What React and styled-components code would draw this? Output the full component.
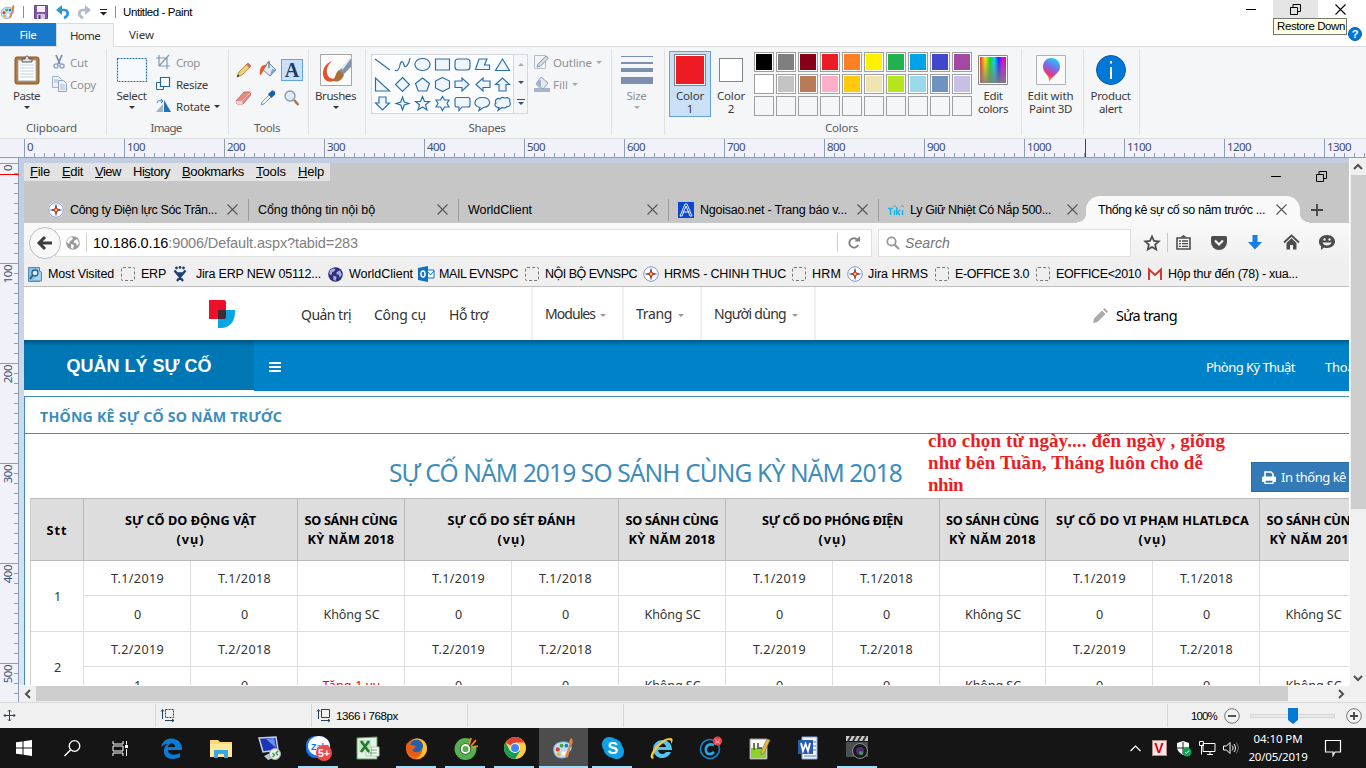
import React, { useLayoutEffect, useRef, useState } from "react";
import styled, { createGlobalStyle, css } from "styled-components";

const Global = createGlobalStyle`
  * { box-sizing: border-box; }
  body { margin: 0; overflow: hidden; background: #fff; }
  svg { display: block; flex: none; overflow: visible; }
`;

const ui = `"Noto Sans", "Open Sans", sans-serif`;
const arial = `"Liberation Sans", Arial, sans-serif`;

/* Spreads a label over a given width by adjusting its tracking. */
const FitSpan = styled.span`
  display: inline-block;
  white-space: pre;
  flex: none;
`;
function Fit({ w, children }) {
  const ref = useRef(null);
  const [gap, setGap] = useState(0);
  useLayoutEffect(() => {
    const el = ref.current;
    el.style.letterSpacing = "0px";
    const natural = el.getBoundingClientRect().width;
    setGap((w - natural) / el.textContent.length);
  }, [w]);
  return <FitSpan ref={ref} style={{ letterSpacing: `${gap}px` }}>{children}</FitSpan>;
}

const Svg = ({ w = 16, h = w, box = `0 0 ${w} ${h}`, children, ...rest }) => (
  <svg width={w} height={h} viewBox={box} fill="none" {...rest}>{children}</svg>
);

/* ---------- window frame ---------- */
const Screen = styled.div`
  width: 1366px; height: 768px; overflow: hidden;
  display: flex; flex-direction: column; position: relative;
  font-family: ${ui}; font-size: 11.5px; color: #444;
`;
const TitleBar = styled.div`
  height: 23px; display: flex; align-items: center; justify-content: space-between; background: #fff; flex: none;
`;
const Quick = styled.div`display: flex; align-items: center; height: 23px;`;
const QuickSlot = styled.span`
  width: ${p => p.$w}px; display: flex; justify-content: center;
`;
const QuickSep = styled.i`width: 1px; height: 12px; background: #8d8d8d;`;
const WinTitle = styled.span`
  margin-left: 6px; font: 11.5px ${arial}; color: #000;
`;
const WinButtons = styled.div`display: flex; align-self: flex-start;`;
const WinButton = styled.div`
  width: 45px; height: 22px; display: flex; align-items: center; justify-content: center;
  padding-bottom: 3px;
  background: ${p => (p.$hot ? "#e5e5e5" : "none")};
`;
const Tooltip = styled.div`
  position: absolute; left: 1273px; top: 18px; width: 74px; height: 17px; padding-left: 3px;
  background: #ffffe1; border: 1px solid #767676; color: #000;
  font: 11.5px/15px ${arial};
`;
const HelpBadge = styled.div`
  position: absolute; left: 1348px; top: 27px; width: 14px; height: 14px; border-radius: 50%;
  background: #0078d7; border: 1px solid #0b5ea8; color: #fff; font: bold 11px/12px ${arial}; text-align: center;
`;
const TabStrip = styled.div`
  height: 24px; flex: none; display: flex; background: #fff; box-shadow: inset 0 -1px #dadbdc; 
`;
const RibbonTab = styled.div`
  width: ${p => p.$w}px; height: ${p => (p.$kind === "home" ? 24 : 23)}px;
  display: flex; justify-content: center; align-items: center;
  color: #333;
  ${p => p.$kind === "file" && css`background: #1979ca; color: #fff;`}
  ${p => p.$kind === "home" && css`background: #f5f6f7; border: 1px solid #dadbdc; border-bottom: 0;`}
`;

/* ---------- ribbon ---------- */
const Ribbon = styled.div`
  height: 92px; flex: none; background: #f5f6f7; border-bottom: 1px solid #dadbdc;
  display: flex; padding: 2px 0 3px;
`;
const Group = styled.div`
  width: ${p => p.$w}px; height: 86px; display: flex; flex-direction: column;
  border-right: 1px solid #e0e1e3; flex: none;
`;
const GroupBody = styled.div`height: 70px; flex: none; display: flex; padding-left: ${p => p.$pad || 0}px;`;
const GroupLabel = styled.div`
  height: 15px; flex: none; line-height: 15px; display: flex; justify-content: center; color: #5a5a5a; padding: 0 3px 0 0; margin-top: 1px;
`;
const Big = styled.div`
  width: ${p => p.$w}px; height: 66px; margin-top: 2px; margin-left: ${p => p.$ml || 0}px;
  display: flex; flex-direction: column; align-items: center; flex: none;
  color: ${p => (p.$dim ? "#8f9196" : "#3b3b3b")};
  ${p => p.$active && css`
    background: #c9e0f7; box-shadow: inset 0 0 0 1px #62a2e4;
  `}
`;
const BigArt = styled.div`height: 38px; display: flex; align-items: center; justify-content: center; flex: none;`;
const BigText = styled.div`height: 13px; line-height: 13px; flex: none;`;
const Caret = styled.i`
  border: ${p => p.$s || 3}px solid transparent; border-bottom: 0;
  border-top-color: ${p => p.$c || "#333"}; margin: ${p => p.$m || "4px 0 0"};
`;
const SmallCol = styled.div`display: flex; flex-direction: column; padding-top: 2px; width: ${p => p.$w}px; flex: none;`;
const Small = styled.div`
  height: 22px; display: flex; align-items: center; color: ${p => (p.$dim ? "#8f9196" : "#3b3b3b")};
`;
const SmallIcon = styled.span`width: ${p => p.$w || 19}px; display: flex;`;
const ToolGrid = styled.div`
  display: grid; grid-template-columns: repeat(3, 24px); grid-template-rows: 22px 22px; row-gap: 6px; padding-top: 10px;
`;
const ToolCell = styled.div`
  display: flex; align-items: center; justify-content: center; width: 22px;
  ${p => p.$active && css`background: #c9e0f7; border: 1px solid #62a2e4;`}
`;
const ToolLetter = styled.span`font: bold 20px/20px "Liberation Serif", serif; color: #1e3e66;`;
const ShapeBox = styled.div`
  width: 157px; height: 60px; margin-top: 5px; display: flex; border: 1px solid #d3d7de; background: #fbfcfd; flex: none;
`;
const ShapeGrid = styled.div`
  width: 141px; display: grid; grid-template-columns: repeat(7, 20px); grid-auto-rows: 19.6px; justify-items: center; align-items: center;
`;
const ShapeScroll = styled.div`
  flex: 1; border-left: 1px solid #d3d7de; display: flex; flex-direction: column; align-items: center; justify-content: space-around; background: #f5f6f7;
`;
const Swatch = styled.div`
  width: ${p => p.$s}px; height: ${p => p.$s}px; border: 1px solid #848484; background: ${p => p.$c};
  box-shadow: inset 0 0 0 1px #fff;
`;
const Palette = styled.div`
  display: grid; grid-template-columns: repeat(10, 20px); grid-auto-rows: 20px; gap: 2px; padding-top: 3px; margin: 0 4px 0 3px;
`;
const PaletteCell = styled.i`
  border: 1px solid #a0a0a0; background: ${p => p.$c || "#f5f6f7"};
  box-shadow: inset 0 0 0 1px ${p => (p.$c ? "#fff" : "#f5f6f7")};
`;
const SizeBars = styled.div`
  display: flex; flex-direction: column; width: 32px; height: 28px; justify-content: space-between;
`;
const SizeBar = styled.i`height: ${p => p.$h}px; background: #7d8fb0;`;

/* ---------- rulers ---------- */
const HRuler = styled.div`
  height: 19px; flex: none; padding-left: 24px; display: flex; overflow: hidden; position: relative;
  background: linear-gradient(#8c9db9, #8c9db9) 0 18px / 100% 1px no-repeat,
    repeating-linear-gradient(90deg, #8c9db9 0 1px, transparent 1px 10px) 24px 14px / 100% 5px no-repeat, #f0f1f9;
`;
const HMark = styled.span`
  width: 100px; height: 19px; flex: none; border-left: 1px solid #8c9db9; padding-left: 2px;
  line-height: 16px; color: #3d4f75;
`;
const HCursor = styled.i`position: absolute; left: 1085px; top: 0; width: 1px; height: 18px; background: #e80000;`;
const Work = styled.div`height: 544px; flex: none; display: flex;`;
const VRuler = styled.div`
  width: 19px; height: 544px; flex: none; padding-top: 5px; overflow: hidden; position: relative;
  background: linear-gradient(#8c9db9, #8c9db9) 18px 0 / 1px 100% no-repeat,
    repeating-linear-gradient(180deg, #8c9db9 0 1px, transparent 1px 10px) 14px 5px / 5px 100% no-repeat, #f0f1f9;
`;
const VMark = styled.div`
  height: 100px; border-top: 1px solid #8c9db9; display: flex; padding-top: 1px;
`;
const VText = styled.span`
  writing-mode: vertical-rl; transform: rotate(180deg); line-height: 16px; width: 16px; color: #3d4f75;
  height: max-content; letter-spacing: -.5px;
`;
const VCursor = styled.i`position: absolute; left: 0; top: 16px; width: 19px; height: 1px; background: #ff0000;`;
const Stage = styled.div`width: 1347px; display: flex; flex-direction: column;`;
const StageTop = styled.div`height: 528px; display: flex;`;
const Backdrop = styled.div`
  width: 1330px; height: 527px; padding: 5px 0 0 5px; background: linear-gradient(#c3cde1, #dce5f2);
  margin-right: 1px;
`;
const VScroll = styled.div`
  width: 16px; height: 528px; background: #f0f0f0; display: flex; flex-direction: column; align-items: center;
`;
const VThumb = styled.i`width: 15px; height: 334px; background: #cdcdcd;`;
const HScroll = styled.div`height: 16px; background: #f0f0f0; display: flex;`;
const HThumb = styled.i`width: 1252px; height: 15px; background: #cdcdcd;`;
const ArrowSlot = styled.span`
  width: ${p => p.$w}px; height: ${p => p.$h}px; display: flex; align-items: center; justify-content: center;
`;

/* ---------- browser in the canvas ---------- */
const Browser = styled.div`
  width: 1325px; height: 522px; overflow: hidden; position: relative; background: #fff; color: #000;
  display: flex; flex-direction: column;
`;
const Chrome = styled.div`height: 60px; flex: none; background: #c6c6c6;`;
const ChromeTop = styled.div`display: flex; justify-content: space-between; height: 33px;`;
const MenuBar = styled.div`
  width: 306px; height: 18px; background: #e3e3e3; display: flex; font: 13px/18px ${arial}; padding-left: 6px;
`;
const MenuItem = styled.span`width: ${p => p.$w}px; flex: none; u { text-underline-offset: 1px; }`;
const InnerButtons = styled.div`display: flex; gap: 35px; padding: 8px 22px 0 0;`;
const Tabs = styled.div`height: 27px; display: flex; padding-left: 15px; font: 12.5px ${arial};`;
const Tab = styled.div`
  width: 210px; height: 27px; display: flex; align-items: center; padding: 0 11px 0 9px; justify-content: space-between; position: relative;
  &::after { content: ""; position: absolute; right: 0; top: 3px; width: 1px; height: 22px; background: ${p => (p.$last ? "none" : "#9c9c9c")}; }
`;
const TabName = styled.span`display: flex; align-items: center; gap: 6px;`;
const ActiveTab = styled.div`
  width: 214px; height: 27px; display: flex; align-items: center; justify-content: space-between;
  padding: 0 13px 0 12px; background: #f9f9f9; border-radius: 14px 14px 0 0; position: relative; margin-left: -3px;
  &::before, &::after { content: ""; position: absolute; bottom: 0; width: 9px; height: 10px; }
  &::before { left: -9px; background: radial-gradient(circle at 0 0, transparent 9px, #f9f9f9 9.5px); }
  &::after { right: -9px; background: radial-gradient(circle at 100% 0, transparent 9px, #f9f9f9 9.5px); }
`;
const NewTab = styled.span`padding: 8px 0 0 11px;`;
const NavBar = styled.div`
  height: 39px; flex: none; background: linear-gradient(#f9f9f9, #efefef); display: flex; align-items: center; padding-left: 5px;
`;
const BackButton = styled.div`
  width: 32px; height: 32px; border-radius: 50%; border: 1px solid #bdbdbd; background: #f8f8f8; flex: none; z-index: 1;
  display: flex; align-items: center; justify-content: center; 
`;
const Url = styled.div`
  width: 817px; height: 28px; margin-left: -6px; border: 1px solid #dfdfdf; background: #fff;
  display: flex; align-items: center; font: 14.5px ${arial}; color: #808080; padding: 0 10px 0 10px;
  b { font-weight: 400; color: #000; }
`;
const UrlSep = styled.i`width: 1px; height: 19px; background: #cfcfcf; margin: ${p => p.$m}; flex: none;`;
const Grow = styled.span`flex: 1;`;
const SearchBox = styled.div`
  width: 253px; height: 28px; margin-left: 6px; border: 1px solid #dfdfdf; background: #fff; display: flex; align-items: center;
  padding-left: 7px; gap: 5px; font: italic 14px ${arial}; color: #757575;
`;
const NavIcons = styled.div`
  display: grid; grid-template-columns: 31px 30px 42px 30px 42px 30px; justify-items: center; align-items: center; margin-left: 6px;
`;
const StarSlot = styled.span`
  width: 31px; height: 19px; border-right: 1px solid #c8c8c8; display: flex; align-items: center; justify-content: center;
`;
const Bookmarks = styled.div`
  height: 25px; flex: none; background: #efefef; border-bottom: 1px solid #bdbdbd; padding-left: 4px; display: flex; align-items: center;
  font: 12.5px ${arial};
`;
const Bookmark = styled.div`width: ${p => p.$w}px; display: flex; align-items: center; flex: none;`;
const MarkIcon = styled.span`width: ${p => p.$w || 20}px; display: flex; flex: none;`;
const DashBox = styled.i`width: 14px; height: 14px; border: 1px dashed #777; border-radius: 2px;`;

/* ---------- web page ---------- */
const AdminBar = styled.div`
  height: 53px; flex: none; display: flex; font-size: 14px; color: #333; padding-left: 185px; align-items: center;
`;
const AdminLinks = styled.div`display: flex; padding: 1px 0 0 66px; width: 296px; gap: 23px;`;
const Dropdown = styled.div`
  width: ${p => p.$w}px; height: 53px; border-left: 2px solid #f0f0f0; padding: 0 0 0 12px; display: flex; align-items: center;
  ${p => p.$end && css`border-right: 2px solid #f0f0f0;`}
`;
const EditPage = styled.div`display: flex; align-items: center; gap: 8px; margin-left: 277px; color: #000; font-size: 14.5px; padding-top: 3px;`;
const Banner = styled.div`
  height: 51px; flex: none; background: linear-gradient(rgba(0,40,70,.45), transparent 6px), #0082c8; display: flex; color: #fff; font-size: 13px;
`;
const Brand = styled.div`
  width: 230px; height: 51px; flex: none; background: linear-gradient(rgba(0,40,70,.45), transparent 6px), #0077b5; border-bottom: 1px solid #fff;
  display: flex; align-items: center; justify-content: center; font: bold 18px ${arial}; padding-top: 2px;
`;
const BannerBar = styled.div`width: 1095px; display: flex; align-items: center; padding: 2px 0 0 15px; white-space: nowrap;`;
const BannerLinks = styled.div`display: flex; gap: 30px; margin-left: 925px;`;
const Panel = styled.div`
  margin-top: 5px; border-top: 1px solid #3c8dbc; border-left: 1px solid #3c8dbc; flex: 1; min-height: 0; overflow: hidden;
`;
const PanelHead = styled.div`
  height: 37px; border-bottom: 1px solid #3c8dbc; display: flex; align-items: center; padding: 2px 0 0 15px; color: #3c8dbc;
  font-weight: 700; font-size: 14.2px; 
`;
const ReportRow = styled.div`height: 64px; display: flex; color: #3c8dbc; font-size: 24.5px; line-height: 34px; padding: 22px 0 0 364px;`;
const PrintButton = styled.div`
  width: 120px; height: 30px; background: #337ab7; border: 1px solid #2e6da4; color: #fff; font-size: 13px; flex: none;
  display: flex; align-items: center; gap: 5px; padding-left: 10px; margin: 6px 0 0 349px;
`;
const Grid = styled.div`
  width: 1338px; margin-left: 5px; border-top: 1px solid #b9b9b9; border-left: 1px solid #ccc; display: grid;
  grid-template-columns: 53px repeat(8, 107px) 106px repeat(3, 107px);
  grid-template-rows: 62px 35px 36px 35px 36px; color: #333; font-size: 12.6px;
`;
const Head = styled.div`
  grid-column: span ${p => p.$span || 1}; background: #ddd; border-right: 1px solid #b9b9b9; border-bottom: 1px solid #b9b9b9;
  display: flex; flex-direction: column; align-items: center; justify-content: center; line-height: 19px; padding-top: 1px;
  font-weight: 700; font-size: 12.7px; color: #000;
`;
const Cell = styled.div`
  grid-row: span ${p => p.$rows || 1}; border-right: 1px solid #ddd; border-bottom: 1px solid #ddd; padding: 1px 0 0 1px;
  display: flex; align-items: center; justify-content: center; color: ${p => (p.$red ? "#f00" : "#333")};
`;
const Note = styled.div`
  position: absolute; left: 904px; top: 267px; color: #ed1c24; font: bold 19px/22px "Liberation Serif", serif;
  display: flex; flex-direction: column; align-items: flex-start;
`;

/* ---------- status bar and taskbar ---------- */
const Status = styled.div`
  height: 26px; flex: none; background: #f0f0f0; border-top: 1px solid #d9d9d9; display: flex; align-items: center; font: 11.5px ${arial}; color: #000;
`;
const Pane = styled.div`
  width: ${p => p.$w}px; height: 23px; border-right: 1px solid #d7d7d7; display: flex; align-items: center; padding-left: ${p => p.$pad}px; gap: 5px;
`;
const Zoom = styled.div`display: flex; align-items: center; padding-left: 23px;`;
const RoundKnob = styled.span`margin-left: ${p => p.$m}px;`;
const Track = styled.div`
  width: 85px; height: 4px; background: #e7eaea; border: 1px solid #d6d6d6; margin-left: 10px; display: flex; justify-content: center; align-items: center;
`;
const TaskBar = styled.div`
  height: 40px; flex: none; background: #151515; display: flex; color: #fff;
`;
const TaskSys = styled.div`display: grid; grid-template-columns: repeat(3, 48px); align-items: center; justify-items: center; width: 147px;`;
const Task = styled.div`
  width: 49px; height: 40px; display: flex; align-items: center; justify-content: center; position: relative;
  background: ${p => (p.$active ? "#4d4d4d" : "none")};
  &::after { content: ""; position: absolute; bottom: 0; height: 2px; left: ${p => (p.$active ? 0 : 4)}px; right: ${p => (p.$active ? 0 : 5)}px;
    background: ${p => (p.$open ? "#a2dcf8" : "none")}; }
`;
const Tray = styled.div`
  margin-left: auto; display: flex; align-items: center; width: 243px;
`;
const TraySlot = styled.span`width: ${p => p.$w || 24}px; display: flex; justify-content: center;`;
const Clock = styled.div`
  width: 70px; display: flex; flex-direction: column; align-items: center; font-size: 11.5px; line-height: 18px; padding-bottom: 1px;
`;
const VBadge = styled.span`
  width: 15px; height: 16px; background: #fbe9e9; border: 1px solid #b88; color: #d00; font: bold 14px/14px ${arial}; text-align: center;
`;

/* ---------- icons ---------- */
const PaintIcon = ({ s = 16 }) => (
  <Svg w={s} box="0 0 24 24">
    <path d="M2 16C0 9 5 5 12 5c7 0 9 4 8 8-1 3-4 2-4 5s-2 4-6 4-7-2-8-6z" fill="#bfe0f2" stroke="#6fa5c6" />
    <circle cx="6" cy="13" r="2.2" fill="#e43d2f" /><circle cx="10" cy="9" r="2" fill="#46a546" />
    <circle cx="15" cy="9" r="2" fill="#2a76c9" /><circle cx="7" cy="18" r="2" fill="#f3b51c" /><circle cx="12" cy="17" r="2" fill="#fff" />
    <path d="M20 1c3 3 1 7 0 8l-3 11c-1 2-3 2-3 0l4-12c0-3 0-5 2-7z" fill="#e98532" /><path d="M18 9l2 .6" stroke="#888" strokeWidth="1.5" />
  </Svg>
);
const Restore = ({ c = "#000" }) => <Svg w={11}><path d="M.5 3.500h7v7h-7zM3 3.500v-3h7.500v7h-3" stroke={c} /></Svg>;
const Minus = () => <Svg w={10} h={11}><path d="M0 5.500h10" stroke="#000" /></Svg>;
const Cross = ({ s = 11, c = "#000" }) => <Svg w={s} box="0 0 11 11"><path d="M.5.5l10 10M10.500.5l-10 10" stroke={c} strokeWidth="1.1" /></Svg>;
const Star4 = () => (
  <Svg w={16}><rect width="16" height="16" rx="8" fill="#fff" /><circle cx="8" cy="8" r="7.300" stroke="#8090c8" />
    <path d="M8 1.500l1.300 5.200L14.500 8l-5.200 1.300L8 14.500l-1.300-5.200L1.500 8l5.200-1.300z" fill="#2b2f86" />
    <path d="M8 4.500l1.500 2L11.500 8l-2 1.500L8 11.500l-1.500-2L4.500 8l2-1.500z" fill="#e23b26" /><circle cx="8" cy="8" r="1.200" fill="#ffcf33" /></Svg>
);
const Globe = ({ c = "#9a9a9a", l = "#fff", s = 14 }) => (
  <Svg w={s} box="0 0 14 14"><circle cx="7" cy="7" r="6.800" fill={c} />
    <path d="M2 3c2-2 4-2 5-1L6 4 4 5 3 8 1 6zM8 5l3-2 2 4-2 3-1-3-2 0zM5 8l3 1-1 4-2-1z" fill={l} /></Svg>
);
const Arrow = ({ d }) => <Svg w={8}><path d={d} stroke="#505050" strokeWidth="2" /></Svg>;

const shapePaths = [
  "M1 3l15 11", "M1 14c2 2 4 0 5-5s3-4 4 0 5 0 6-7", "M8.500 2.500a7.500 6 0 1 0 .01 0z", "M1.500 3h14v11h-14z",
  "M4 3h9q3 0 3 3v5q0 3-3 3H4q-3 0-3-3V6q0-3 3-3z", "M5 3h8l-2.500 6H15.500v4.500H1.500z", "M8.500 3l7 11.500h-14z",
  "M1.500 2v13h14z", "M8.500 1.500l7 7-7 7-7-7z", "M8.500 2l7 5.500-2.700 7.500H4.200L1.500 7.500z", "M8.500 1.500l7 3.500v7l-7 3.500-7-3.500V5z",
  "M1 5h7V2l7 6.500-7 6.500v-3.500H1z", "M16 5H9V2L2 8.500 9 15v-3.500h7z", "M5 15V8.500H1.500L8.500 2l7 6.500H12V15z",
  "M5 2v6H1.500l7 7 7-7H12V2z", "M8.500 2l1.700 5L15 8.500l-4.800 1.500-1.700 5-1.700-5L2 8.500 6.800 7z",
  "M8.500 1.500l2 5h5l-4 3.300 1.500 5.200-4.500-3-4.500 3 1.500-5.200-4-3.300h5z", "M8.500 1.500l2 3.500h4.500l-2 3.500 2 3.500h-4.500l-2 3.500-2-3.500H2l2-3.500-2-3.500h4.500z",
  "M3 2.500h11q2 0 2 2V10q0 2-2 2H8l-3 3.500V12H3q-2 0-2-2V4.500q0-2 2-2z", "M5 15.500l1-3C-2 10.500 0 2.500 8.500 2.500s10 9 1 10z",
  "M4 15.500l1-3C1 13 0 9 2 8c-2-3 2-5.500 4-4 2-3 4-1 5-1 3-1 6 1 4.500 3 2 3 0 6-2.500 5.500-1 2-4 1.500-5 1z",
];
const Shape = ({ d }) => <Svg w={17} h={17}><path d={d} stroke="#2c6da8" strokeWidth="1.150" fill="#eef6fb" /></Svg>;

const rowColors = [
  "#000000", "#7f7f7f", "#880015", "#ed1c24", "#ff7f27", "#fff200", "#22b14c", "#00a2e8", "#3f48cc", "#a349a4",
  "#ffffff", "#c3c3c3", "#b97a57", "#ffaec9", "#ffc90e", "#efe4b0", "#b5e61d", "#99d9ea", "#7092be", "#c8bfe7",
  ...Array(10).fill(null),
];

function RibbonArea() {
  return (
    <Ribbon>
      <Group $w={107}>
        <GroupBody>
          <Big $w={51} $ml={1}>
            <BigArt>
              <Svg w={26} h={30}>
                <rect x="1" y="2" width="24" height="27" rx="2" fill="#b1773a" stroke="#8b5a28" />
                <path d="M4 5h18v21H4z" fill="#fff" stroke="#9aa7b5" />
                <path d="M6 10h14M6 13h14M6 16h14M6 19h14M6 22h14" stroke="#c0cfe0" />
                <path d="M8 7V4h3c0-4 4-4 4 0h3v3z" fill="#ddd" stroke="#555" />
              </Svg>
            </BigArt>
            <BigText><Fit w={27}>Paste</Fit></BigText><Caret $m="4px 0 0" />
          </Big>
          <SmallCol $w={54}>
            <Small $dim><SmallIcon $w={18}>
              <Svg w={14} h={16}><path d="M4 1l4 9M10 1L6 10" stroke="#7c8fb0" strokeWidth="1.800" /><circle cx="4" cy="12" r="2" stroke="#93a3c0" strokeWidth="1.500" /><circle cx="10" cy="12" r="2" stroke="#93a3c0" strokeWidth="1.500" /></Svg>
            </SmallIcon><Fit w={18}>Cut</Fit></Small>
            <Small $dim><SmallIcon $w={18}>
              <Svg w={16}><path d="M.5.5h6l3 3v8h-9z" fill="#eef2f8" stroke="#9fb0cb" /><path d="M6.500 4.500h5l3 3v8h-8z" fill="#eef2f8" stroke="#93a5c3" /><path d="M2 4h4M2 6h4M8 9h5M8 11h5M8 13h5" stroke="#a9b8d0" /></Svg>
            </SmallIcon><Fit w={26}>Copy</Fit></Small>
          </SmallCol>
        </GroupBody>
        <GroupLabel><Fit w={51}>Clipboard</Fit></GroupLabel>
      </Group>
      <Group $w={122}>
        <GroupBody>
          <Big $w={49}>
            <BigArt><Svg w={30} h={24}><rect x=".5" y=".5" width="29" height="23" fill="#f6fafe" stroke="#2671b8" strokeDasharray="2 1" strokeWidth="1.200" /></Svg></BigArt>
            <BigText><Fit w={30}>Select</Fit></BigText><Caret $m="4px 0 0" />
          </Big>
          <SmallCol $w={71}>
            <Small $dim><SmallIcon $w={20}><Svg w={14} box="0 0 14 14"><path d="M3 0v11h11M0 3h11v11M13 0L3 11" stroke="#8497b5" strokeWidth="1.200" /></Svg></SmallIcon><Fit w={24}>Crop</Fit></Small>
            <Small><SmallIcon $w={20}><Svg w={14} box="0 0 14 14"><path d="M.5 5.500h7v7h-7z" fill="#fff" stroke="#1e66a8" /><path d="M4.500.5h9v9h-9z" fill="#fff" stroke="#1e66a8" strokeWidth="1.200" /></Svg></SmallIcon><Fit w={32}>Resize</Fit></Small>
            <Small><SmallIcon $w={20}><Svg w={16} h={14}><path d="M0 13h7V5z" fill="#9fb3c6" /><path d="M8 1v12h7z" fill="#1e70b8" /><path d="M1 4c0-2 2-3 5-2M5 0l2 2-2 2" stroke="#2c82d6" /></Svg></SmallIcon><Fit w={34}>Rotate</Fit><Caret $m="0 0 0 4px" /></Small>
          </SmallCol>
        </GroupBody>
        <GroupLabel><Fit w={31}>Image</Fit></GroupLabel>
      </Group>
      <Group $w={80}>
        <GroupBody $pad={4}>
          <ToolGrid>
            <ToolCell><Svg w={16}><path d="M1 15l2-5L12 1l3 3-9 9z" fill="#f3cf76" stroke="#8f6a22" strokeWidth=".7" /><path d="M12 1l3 3-2 1.500L10.500 3z" fill="#d9695f" /><path d="M1 15l1-2.500L3.500 14z" fill="#222" /></Svg></ToolCell>
            <ToolCell><Svg w={18}><path d="M9 1l8 8-6 6-7-6z" fill="#dbe8f2" stroke="#6b87a5" /><path d="M8 4c-5-1-8 3-7 10 2 0 3-4 4-6z" fill="#e8592c" /><path d="M11 15l6-6-4-1z" fill="#7ba7ce" /><path d="M10 0v7" stroke="#556" /></Svg></ToolCell>
            <ToolCell $active><ToolLetter>A</ToolLetter></ToolCell>
            <ToolCell><Svg w={18} h={16}><path d="M1 11L9 2h7l-1 4-7 8H2z" fill="#e88a82" stroke="#b85c55" strokeWidth=".8" /><path d="M1 11l6 0 1 3H2z" fill="#f9d3cf" /><path d="M7 11l9-9" stroke="#f6c4bf" /></Svg></ToolCell>
            <ToolCell><Svg w={16}><path d="M1 15l1-3 7-7 2 2-7 7z" fill="#e9f1f8" stroke="#6d8aa8" strokeWidth=".8" /><path d="M8 4l4-3.500c3 0 3.500 2 3 4L11.500 8z" fill="#1d5ea8" /></Svg></ToolCell>
            <ToolCell><Svg w={16}><circle cx="6" cy="6" r="5" fill="#dcecf8" stroke="#8a97a5" strokeWidth="1.300" /><path d="M10 10l4.500 5" stroke="#a0784f" strokeWidth="2.500" /></Svg></ToolCell>
          </ToolGrid>
        </GroupBody>
        <GroupLabel><Fit w={26}>Tools</Fit></GroupLabel>
      </Group>
      <Group $w={57}>
        <GroupBody>
          <Big $w={53}>
            <BigArt><Svg w={32}><path d="M.5.5h31v31H.5z" fill="#fcfcfc" stroke="#a5a5a5" /><path d="M12 7C1 11 1 24 7 27c5 2 9-1 10-4-4 3-9 2-10-4-1-5 2-9 5-12z" fill="#e8502a" /><path d="M31 3v10L22 22l-4-4z" fill="#8494a8" /><path d="M31 3l-9 12" stroke="#e6ebf2" strokeWidth="2" /><path d="M19 16l5 5c-3 7-7 7-12 6 4-3 3-8 7-11z" fill="#a96f35" /></Svg></BigArt>
            <BigText><Fit w={41}>Brushes</Fit></BigText><Caret $m="4px 0 0" />
          </Big>
        </GroupBody>
      </Group>
      <Group $w={246}>
        <GroupBody $pad={5}>
          <ShapeBox>
            <ShapeGrid>{shapePaths.map((d, i) => <Shape key={i} d={d} />)}</ShapeGrid>
            <ShapeScroll>
              <Svg w={6} h={3}><path d="M0 3l3-3 3 3z" fill="#aaa" /></Svg>
              <Svg w={6} h={3}><path d="M0 0l3 3 3-3z" fill="#3c4f6e" /></Svg>
              <Svg w={8} h={6}><path d="M0 .5h8" stroke="#3c4f6e" /><path d="M1 3l3 3 3-3z" fill="#3c4f6e" /></Svg>
            </ShapeScroll>
          </ShapeBox>
          <SmallCol $w={76}>
            <Small $dim><SmallIcon $w={25}><Svg w={22} h={14} box="-6 0 22 14"><path d="M.5.500h11v13H.5z" fill="#f3f5f8" stroke="#b5bdc9" /><path d="M3 12l1-3 8-8 2.500 2-8 8z" fill="#d5dde8" stroke="#8496b2" /></Svg></SmallIcon><Fit w={39}>Outline</Fit><Caret $c="#aaa" $m="0 0 0 4px" /></Small>
            <Small $dim><SmallIcon $w={25}><Svg w={22} h={16} box="-6 0 22 16"><path d="M0 12h16v4H0z" fill="#a5b4cb" /><path d="M7 1l7 6-5 6-7-5z" fill="#e4eaf2" stroke="#8d9eb9" /><path d="M2 8c1-3 3-4 5-4v6l-2 2z" fill="#a3b2c9" /></Svg></SmallIcon><Fit w={15}>Fill</Fit><Caret $c="#aaa" $m="0 0 0 4px" /></Small>
          </SmallCol>
        </GroupBody>
        <GroupLabel><Fit w={37}>Shapes</Fit></GroupLabel>
      </Group>
      <Group $w={53}>
        <GroupBody>
          <Big $w={49} $dim>
            <BigArt><SizeBars><SizeBar $h={1} /><SizeBar $h={2} /><SizeBar $h={4} /><SizeBar $h={7} /></SizeBars></BigArt>
            <BigText><Fit w={20}>Size</Fit></BigText><Caret $c="#aaa" $m="4px 0 0" />
          </Big>
        </GroupBody>
      </Group>
      <Group $w={357}>
        <GroupBody $pad={4}>
          <Big $w={42} $active>
            <BigArt><Swatch $s={32} $c="#ed1c24" /></BigArt>
            <BigText><Fit w={28}>Color</Fit></BigText><BigText>1</BigText>
          </Big>
          <Big $w={40}>
            <BigArt><Swatch $s={24} $c="#fff" /></BigArt>
            <BigText><Fit w={28}>Color</Fit></BigText><BigText>2</BigText>
          </Big>
          <Palette>{rowColors.map((c, i) => <PaletteCell key={i} $c={c} />)}</Palette>
          <Big $w={34}>
            <BigArt>
              <Svg w={30}>
                <defs>
                  <linearGradient id="hue"><stop offset="0" stopColor="#f22" /><stop offset=".2" stopColor="#fe0" /><stop offset=".38" stopColor="#1d1" /><stop offset=".55" stopColor="#0df" /><stop offset=".72" stopColor="#22f" /><stop offset=".88" stopColor="#e0e" /><stop offset="1" stopColor="#f04" /></linearGradient>
                  <linearGradient id="fade" x2="0" y2="1"><stop offset="0" stopColor="#808080" stopOpacity="0" /><stop offset="1" stopColor="#808080" stopOpacity=".9" /></linearGradient>
                </defs>
                <path d="M.5.5h29v29H.5z" fill="#fff" stroke="#8a8a8a" /><path d="M2 2h26v26H2z" fill="url(#hue)" /><path d="M2 2h26v26H2z" fill="url(#fade)" />
              </Svg>
            </BigArt>
            <BigText><Fit w={19}>Edit</Fit></BigText><BigText><Fit w={30}>colors</Fit></BigText>
          </Big>
        </GroupBody>
        <GroupLabel><Fit w={33}>Colors</Fit></GroupLabel>
      </Group>
      <Group $w={62}>
        <GroupBody>
          <Big $w={57}>
            <BigArt>
              <Svg w={30}>
                <defs><linearGradient id="drop" x1=".7" x2=".3" y2="1"><stop offset="0" stopColor="#1fd0f0" /><stop offset=".4" stopColor="#7b6bea" /><stop offset=".7" stopColor="#e8357f" /><stop offset="1" stopColor="#ffb100" /></linearGradient></defs>
                <path d="M.5.5h29v29H.5z" fill="#fafafa" stroke="#b0b0b0" /><path d="M15 3c6 0 9 4 9 9 0 6-7 8-11 15 1-7-6-9-6-15 0-5 3-9 8-9z" fill="url(#drop)" />
              </Svg>
            </BigArt>
            <BigText><Fit w={46}>Edit with</Fit></BigText><BigText><Fit w={43}>Paint 3D</Fit></BigText>
          </Big>
        </GroupBody>
      </Group>
      <Group $w={56}>
        <GroupBody>
          <Big $w={53}>
            <BigArt><Svg w={30}><circle cx="15" cy="15" r="14.500" fill="#0078d7" stroke="#0b5a9e" /><path d="M15 12v12" stroke="#fff" strokeWidth="2" /><path d="M15 6v2.500" stroke="#fff" strokeWidth="2" /></Svg></BigArt>
            <BigText><Fit w={40}>Product</Fit></BigText><BigText><Fit w={23}>alert</Fit></BigText>
          </Big>
        </GroupBody>
      </Group>
    </Ribbon>
  );
}

const bookmarks = [
  [93, "folder", "Most Visited", 66], [52, "dash", "ERP", 25], [155, "jira", "Jira ERP NEW 05112...", 125],
  [90, "globe", "WorldClient", 64], [107, "outlook", "MAIL EVNSPC", 79], [118, "dash", "NỘI BỘ EVNSPC", 92],
  [149, "evn", "HRMS - CHINH THUC", 122], [55, "dash", "HRM", 29], [88, "evn", "Jira HRMS", 60],
  [101, "dash", "E-OFFICE 3.0", 74], [112, "dash", "EOFFICE<2010", 85], [160, "gmail", "Hộp thư đến (78) - xua...", 130],
];
const bookmarkIcons = {
  dash: <DashBox />,
  evn: <Star4 />,
  folder: <Svg w={14}><path d="M.5.5h11v14H.5z" fill="#8cbfe2" stroke="#4f8db9" /><path d="M11.500 4l2 1v9h-9" fill="#a9d3ec" stroke="#4f8db9" /><circle cx="7" cy="6" r="3" fill="#d8edf8" stroke="#27618d" strokeWidth="1.300" /><path d="M5 8l-3 4" stroke="#27618d" strokeWidth="2" /></Svg>,
  jira: <Svg w={14} h={16}><circle cx="3.500" cy="2" r="1.400" fill="#1d426e" /><circle cx="7" cy="1.400" r="1.400" fill="#1d426e" /><circle cx="10.500" cy="2" r="1.400" fill="#1d426e" /><path d="M1.500 4.500l2.500 3h6l2.500-3M7 7v3M4.500 8L10 15M9.500 8L4 15" stroke="#1d426e" strokeWidth="2.300" /></Svg>,
  globe: <Globe c="#2f2f78" l="#a7b0e0" s={15} />,
  outlook: <Svg w={16}><path d="M9 4h7v8H9z" fill="#fff" stroke="#0f71c4" /><path d="M9 5l3.500 4L16 5" stroke="#0f71c4" /><path d="M0 2l10-2v16L0 14z" fill="#0f71c4" /><ellipse cx="5" cy="8" rx="2" ry="3" stroke="#fff" strokeWidth="1.500" /></Svg>,
  gmail: <Svg w={14} h={12}><path d="M0 1h14v11H0z" fill="#f3f3f3" /><path d="M1 12V1.500l6 5.500 6-5.500V12" stroke="#d5382c" strokeWidth="2" /></Svg>,
};

function BrowserChrome() {
  const menu = [["F", "ile", 32, 20], ["E", "dit", 33, 21], ["V", "iew", 38, 26], ["", "History", 49, 37], ["B", "ookmarks", 74, 62], ["T", "ools", 42, 30], ["H", "elp", 32, 26]];
  return (
    <>
      <Chrome>
        <ChromeTop>
          <MenuBar>
            {menu.map(([u, rest, w, tw]) => (
              <MenuItem key={rest} $w={w}><Fit w={tw}>{u ? <><u>{u}</u>{rest}</> : <>Hi<u>s</u>tory</>}</Fit></MenuItem>
            ))}
          </MenuBar>
          <InnerButtons><Minus /><Restore /></InnerButtons>
        </ChromeTop>
        <Tabs>
          <Tab><TabName><Star4 /><Fit w={147}>Công ty Điện lực Sóc Trăn...</Fit></TabName><Cross c="#555" /></Tab>
          <Tab><TabName><Fit w={117}>Cổng thông tin nội bộ</Fit></TabName><Cross c="#555" /></Tab>
          <Tab><TabName><Fit w={64}>WorldClient</Fit></TabName><Cross c="#555" /></Tab>
          <Tab><TabName><Svg w={16}><path d="M0 0h16v16H0z" fill="#0b47cf" /><path d="M2 14l5-12h2l5 12h-2l-4-10-4 10zM4.500 10h7" stroke="#fff" strokeWidth=".9" /></Svg><Fit w={147}>Ngoisao.net - Trang báo v...</Fit></TabName><Cross c="#555" /></Tab>
          <Tab $last>
            <TabName>
              <Svg w={16} h={16}><path d="M0 6.500h5M2.500 6.500V13M6.500 8v5M8.800 5v8M12 8l-2.500 2.500L12 13M14.500 8v5" stroke="#1ab4e8" strokeWidth="1.500" /><path d="M5 5l1.700-1.500L8 5M12.700 5l1.700-1.500L16 5" stroke="#1ab4e8" /></Svg>
              <Fit w={141}>Ly Giữ Nhiệt Có Nắp 500...</Fit>
            </TabName><Cross c="#555" />
          </Tab>
          <ActiveTab><Fit w={167}>Thống kê sự cố so năm trước ...</Fit><Cross c="#555" /></ActiveTab>
          <NewTab><Svg w={12}><path d="M6 0v12M0 6h12" stroke="#444" strokeWidth="1.800" /></Svg></NewTab>
        </Tabs>
      </Chrome>
      <NavBar>
        <BackButton><Svg w={16} h={14}><path d="M15 7H3M8 1L2 7l6 6" stroke="#3d3d3d" strokeWidth="3" /></Svg></BackButton>
        <Url>
          <Globe />
          <UrlSep $m="0 6px" />
          <Fit w={265}><b>10.186.0.16</b>:9006/Default.aspx?tabid=283</Fit>
          <Grow />
          <UrlSep $m="0 10px 0 0" />
          <Svg w={13} box="0 0 14 14"><path d="M11 9.500A5 5 0 1 1 9.500 3.500" stroke="#808080" strokeWidth="2" /><path d="M7 6h6V0z" fill="#808080" /></Svg>
        </Url>
        <SearchBox><Svg w={14}><circle cx="5.500" cy="5.500" r="4.200" stroke="#999" strokeWidth="1.800" /><path d="M8.500 8.500l4.500 4.500" stroke="#999" strokeWidth="2.200" /></Svg><Fit w={45}>Search</Fit></SearchBox>
        <NavIcons>
          <StarSlot><Svg w={16}><path d="M8 1.500l2 4.500 4.800.5-3.600 3.200 1 4.800L8 12l-4.200 2.500 1-4.800L1.200 6.500 6 6z" stroke="#4c4c4c" strokeWidth="1.800" /></Svg></StarSlot>
          <Svg w={15}><path d="M1 3h13v11H1z" stroke="#4c4c4c" strokeWidth="1.600" /><path d="M4 2.500L7.500 0 11 2.500z" fill="#4c4c4c" /><path d="M3 6h2M6 6h6M3 8.700h2M6 8.700h6M3 11.400h2M6 11.400h6" stroke="#4c4c4c" strokeWidth="1.300" /></Svg>
          <Svg w={16} h={14}><path d="M1.500 0h13q1.500 0 1.500 1.500V6a8 8 0 0 1-16 0V1.500Q0 0 1.500 0z" fill="#4c4c4c" /><path d="M4 4.500l4 4 4-4" stroke="#f3f3f3" strokeWidth="2.200" /></Svg>
          <Svg w={14} h={15}><path d="M4.500 0h5v7H14l-7 7.500L0 7h4.500z" fill="#177de8" /></Svg>
          <Svg w={15}><path d="M0 7.500L7.500.5l7.500 7" stroke="#4c4c4c" strokeWidth="1.800" /><path d="M2.500 8l5-4.700 5 4.700v6.500H9V10H6v4.500H2.500z" fill="#4c4c4c" /></Svg>
          <Svg w={16}><path d="M8 0c5 0 8 3 8 6.500S13 13 8 13c-1 0-2 0-3-.5L2 15v-4C0 9.500 0 8 0 6.500 0 3 3 0 8 0z" fill="#4c4c4c" /><circle cx="5.500" cy="4.500" r="1.200" fill="#eee" /><circle cx="10.500" cy="4.500" r="1.200" fill="#eee" /><path d="M3.500 7.500h9c-1 4-8 4-9 0z" fill="#eee" /></Svg>
        </NavIcons>
      </NavBar>
      <Bookmarks>
        {bookmarks.map(([w, icon, text, tw], i) => (
          <Bookmark key={i} $w={w}>
            <MarkIcon $w={icon === "jira" ? 23 : icon === "globe" || icon === "outlook" || icon === "evn" ? 21 : 20}>{bookmarkIcons[icon]}</MarkIcon>
            <Fit w={tw}>{text}</Fit>
          </Bookmark>
        ))}
      </Bookmarks>
    </>
  );
}

const causes = [["SỰ CỐ DO ĐỘNG VẬT", 131], ["SỰ CỐ DO SÉT ĐÁNH", 128], ["SỰ CỐ DO PHÓNG ĐIỆN", 141], ["SỰ CỐ DO VI PHẠM HLATLĐCA", 193]];

function Page() {
  return (
    <>
      <AdminBar>
        <Svg w={26} h={28}><path d="M0 0h15q2 0 2 2v17H0z" fill="#ee1028" /><path d="M9 10h17v2c0 9-5 16-14 16H9z" fill="#06a5e6" /><path d="M9 10h8v7q0 2-2 2H9z" fill="#412a31" /></Svg>
        <AdminLinks><Fit w={50}>Quản trị</Fit><Fit w={52}>Công cụ</Fit><Fit w={39}>Hỗ trợ</Fit></AdminLinks>
        <Dropdown $w={91}><Fit w={50}>Modules</Fit><Caret $s={3.500} $c="#999" $m="3px 0 0 5px" /></Dropdown>
        <Dropdown $w={78}><Fit w={36}>Trang</Fit><Caret $s={3.500} $c="#999" $m="3px 0 0 6px" /></Dropdown>
        <Dropdown $w={116} $end><Fit w={72}>Người dùng</Fit><Caret $s={3.500} $c="#999" $m="3px 0 0 6px" /></Dropdown>
        <EditPage><Svg w={15} h={15}><path d="M0 15l1-4.500L9 2.500 12.500 6l-8 8zM10 1.500L11.500 0 15 3.500 13.500 5z" fill="#aaa" /></Svg><Fit w={61}>Sửa trang</Fit></EditPage>
      </AdminBar>
      <Banner>
        <Brand><Fit w={145}>QUẢN LÝ SỰ CỐ</Fit></Brand>
        <BannerBar>
          <Svg w={12} h={10}><path d="M0 1h12M0 5h12M0 9h12" stroke="#fff" strokeWidth="2" /></Svg>
          <BannerLinks><Fit w={89}>Phòng Kỹ Thuật</Fit><Fit w={34}>Thoát</Fit></BannerLinks>
        </BannerBar>
      </Banner>
      <Panel>
        <PanelHead><Fit w={242}>THỐNG KÊ SỰ CỐ SO NĂM TRƯỚC</Fit></PanelHead>
        <ReportRow>
          <Fit w={513}>SỰ CỐ NĂM 2019 SO SÁNH CÙNG KỲ NĂM 2018</Fit>
          <PrintButton>
            <Svg w={14} h={13}><path d="M3 6V1h6l2 2v3" stroke="#fff" strokeWidth="1.600" /><path d="M1 5.500h12q1 0 1 1V11H0V6.500q0-1 1-1z" fill="#fff" /><path d="M3 9h8v3.300H3z" fill="#337ab7" stroke="#fff" strokeWidth="1.300" /></Svg>
            <Fit w={65}>In thống kê</Fit>
          </PrintButton>
        </ReportRow>
        <Grid>
          <Head><Fit w={21}>Stt</Fit></Head>
          {causes.map(([name, w]) => (
            <React.Fragment key={name}>
              <Head $span={2}><Fit w={w}>{name}</Fit><Fit w={28}>(vụ)</Fit></Head>
              <Head><Fit w={93}>SO SÁNH CÙNG</Fit><Fit w={87}>KỲ NĂM 2018</Fit></Head>
            </React.Fragment>
          ))}
          {[1, 2].map(m => (
            <React.Fragment key={m}>
              <Cell $rows={2}>{m}</Cell>
              {causes.map(([name]) => (
                <React.Fragment key={name}>
                  <Cell><Fit w={53}>{`T.${m}/2019`}</Fit></Cell><Cell><Fit w={53}>{`T.${m}/2018`}</Fit></Cell><Cell />
                </React.Fragment>
              ))}
              {causes.map(([name], i) => {
                const rise = m === 2 && i === 0;
                return (
                  <React.Fragment key={name}>
                    <Cell>{rise ? 1 : 0}</Cell><Cell>0</Cell>
                    <Cell $red={rise}><Fit w={rise ? 58 : 56}>{rise ? "Tăng 1 vụ" : "Không SC"}</Fit></Cell>
                  </React.Fragment>
                );
              })}
            </React.Fragment>
          ))}
        </Grid>
      </Panel>
      <Note>
        <Fit w={297}>cho chọn từ ngày.... đến ngày , giống</Fit>
        <Fit w={275}>như bên Tuần, Tháng luôn cho dễ</Fit>
        <Fit w={35}>nhìn</Fit>
      </Note>
    </>
  );
}

const Knob = ({ plus }) => (
  <Svg w={16}><circle cx="8" cy="8" r="7.300" fill="#f2f2f2" stroke="#777" /><path d={plus ? "M4 8h8M8 4v8" : "M4 8h8"} stroke="#444" strokeWidth="1.800" /></Svg>
);
const SizeGlyph = ({ dashed }) => (
  <Svg w={14} h={13}><path d="M1.500 10V1M0 2.500L1.500.5 3 2.500" stroke="#24425f" /><path d="M4.500.5h8v8h-8z" stroke="#24425f" strokeDasharray={dashed ? "2 1" : "none"} /><path d="M4 11.500h9M11 10l2 1.500L11 13" stroke="#24425f" /></Svg>
);

const tasks = [
  [<Svg w={21}><path d="M0 9C2 0 11-1 16 2c4 2 5 6 5 10H7c0 5 7 6 12 3v4C9 24 2 19 3 12c0-3 2-5 4-6-3 0-5 1-7 3zM7 9h7c0-5-6-5-7 0z" fill="#0a7bd6" /></Svg>],
  [<Svg w={22} h={19}><path d="M0 1h8l2 2h12v15H0z" fill="#fbd775" /><path d="M0 5h22v13H0z" fill="#ffe79b" /><path d="M4 11h14v8h-4v-4H8v4H4z" fill="#36a9e0" /></Svg>],
  [<Svg w={23}><path d="M1 1l17-1 2 13-15 2z" fill="#1b35b8" stroke="#c7d2e4" strokeWidth="1.500" /><path d="M8 2l8-1 2 10z" fill="#6c8cf0" /><path d="M6 19l8-4 4 5-8 3z" fill="#bfc6cf" /><circle cx="17" cy="17" r="5.500" fill="#e7eee7" stroke="#aaa" /><path d="M14.500 16l2 2-2 2M20 14l-2 2 2 2" stroke="#2b9845" strokeWidth="1.300" /></Svg>],
  [<Svg w={26} h={25}><rect x="0" y="0" width="23" height="22" rx="9" fill="#1473ee" /><ellipse cx="13" cy="10" rx="11" ry="10" fill="#fff" /><text x="5" y="14" fill="#1473ee" fontFamily="Liberation Sans" fontWeight="700" fontSize="9">Zalo</text><circle cx="18" cy="17" r="8" fill="#f04848" /><text x="12" y="21" fill="#fff" fontFamily="Liberation Sans" fontWeight="700" fontSize="10.500">5+</text></Svg>, true],
  [<Svg w={22}><path d="M0 1l20-1v22H0z" fill="#e8f3e8" stroke="#5fa061" /><path d="M9 10h13v9H9z" fill="#fff" stroke="#aac9aa" /><path d="M11 13h9M11 16h9M14 10v9" stroke="#6fa56f" /><path d="M2 3h12v12H2z" fill="#c7e3c4" /><path d="M4 4l8 11M12 4L4 15" stroke="#217a36" strokeWidth="2.500" /></Svg>],
  [<Svg w={23}><circle cx="11.500" cy="12" r="10.500" fill="#e86b18" /><path d="M8 3c6-4 14 1 14 8 0 6-5 11-11 11 8-4 8-13 3-15z" fill="#fbc02d" /><circle cx="11.500" cy="9" r="6.500" fill="#2560a8" /><path d="M2 6l4 2 5 1-2 3-2 1c3 4 7 3 9 1-1 5-8 7-12 3C1 14 0 10 2 6z" fill="#e85c14" /></Svg>, true],
  [<Svg w={24}><circle cx="11.500" cy="13" r="8.200" stroke="#56b04d" strokeWidth="5.500" /><path d="M13 11l5-11h6v9z" fill="#151515" /><path d="M15 9l2-7M17 10l5-6M18 12l6-2" stroke="#f28b25" strokeWidth="1.800" /><circle cx="11.500" cy="13" r="4" fill="#56b04d" stroke="#fff" strokeWidth="1.800" /></Svg>, true],
  [<Svg w={22}><circle cx="11" cy="11" r="11" fill="#ffcd40" /><path d="M11 11L1.500 5.500A11 11 0 0 1 20.500 5.500H11z" fill="#db4437" /><path d="M1.500 5.500A11 11 0 0 0 11 22l5-8-5-3-5 3z" fill="#0f9d58" /><circle cx="11" cy="11" r="5" fill="#fff" /><circle cx="11" cy="11" r="4" fill="#4285f4" /></Svg>, true],
  [<PaintIcon s={23} />, true, true],
  [<Svg w={22}><rect width="15" height="15" rx="7" fill="#0fa1e6" /><rect x="7" y="7" width="15" height="15" rx="7" fill="#0fa1e6" /><circle cx="11" cy="11" r="9.500" fill="#0fa1e6" /><text x="5.500" y="17" fill="#fff" fontFamily="Liberation Sans" fontWeight="700" fontSize="16">S</text></Svg>, true],
  [<Svg w={23}><path d="M3 12c1-12 19-12 19 1H8c1 5 6 5 8 2h5C17 24 4 23 3 12zM8 10h8c-1-5-7-5-8 0z" fill="#55c3f0" /><path d="M1 21C-1 15 12 0 21 1c3 1 1 5 0 6 1-5-3-5-8-1S1 18 4 21c-1 1-2 1-3 0z" fill="#f6c93c" /></Svg>],
  [<Svg w={24}><circle cx="11" cy="13" r="9.500" stroke="#1482c8" strokeWidth="1.700" /><path d="M15 9c-5-2-9 1-8 6 1 4 5 4 8 1" stroke="#2ba7ea" strokeWidth="2.600" /><circle cx="18.500" cy="5" r="4.500" fill="#ef4444" /><path d="M16.500 4h1M19.500 4h1M16.500 7c1-1.500 3-1.500 4 0" stroke="#fff" /></Svg>],
  [<Svg w={20} h={23} box="1 0 20 23"><path d="M1 2h17v20H1z" fill="#f6f6ee" stroke="#999" /><path d="M2 11h15v10H2z" fill="#8cd32c" /><path d="M5 6v7M9 6v4M8 11h5" stroke="#444" strokeWidth="1.500" /><path d="M12 15l6-13 3 1-6 13-3 2z" fill="#f0b93b" stroke="#775" strokeWidth=".7" /></Svg>],
  [<Svg w={22}><path d="M4 0h15v22H4z" fill="#eef4fc" stroke="#8ba9d4" /><path d="M13 5h5M13 9h5M13 13h5M6 19h12" stroke="#4d7fc9" /><path d="M0 3h15v14H0z" fill="#2a5caa" /><path d="M3 6l2 8 2.500-7L10 14l2-8" stroke="#fff" strokeWidth="1.800" /></Svg>],
  [<Svg w={24} h={24}><path d="M0 6h22v15H0z" fill="#4c4f52" /><path d="M0 0h22v5H0z" fill="#ccc" /><path d="M2 5l3-5M7 5l3-5M12 5l3-5M17 5l3-5" stroke="#333" strokeWidth="2" /><circle cx="14" cy="15" r="7.500" fill="#1a1a1c" stroke="#8b8b8b" /><circle cx="14" cy="15" r="4" fill="#4a2c72" /><circle cx="15" cy="17" r="2" fill="#3f9c58" /></Svg>, true],
];

export default function App() {
  return (
    <Screen>
      <Global />
      <TitleBar>
        <Quick>
          <QuickSlot $w={16}><PaintIcon /></QuickSlot>
          <QuickSlot $w={14}><QuickSep /></QuickSlot>
          <QuickSlot $w={22}><Svg w={14}><path d="M.5.5h13v13H.5z" fill="#8557a6" stroke="#6b448a" /><path d="M3 1h8v6H3z" fill="#f4f0f8" /><path d="M3 9h8v5H3z" fill="#d4c4e2" /><path d="M4.500 10h2v4h-2z" fill="#5a3678" /></Svg></QuickSlot>
          <QuickSlot $w={22}><Svg w={14}><path d="M2 5h6c5 0 5 6 0 8" stroke="#2e95dd" strokeWidth="2.600" /><path d="M0 5l6-5v10z" fill="#2e95dd" /></Svg></QuickSlot>
          <QuickSlot $w={20}><Svg w={14}><path d="M12 5H6C1 5 1 11 6 13" stroke="#aebccc" strokeWidth="2.600" /><path d="M14 5L8 0v10z" fill="#aebccc" /></Svg></QuickSlot>
          <QuickSlot $w={19}><Svg w={7} h={6} ><path d="M0 .5h7" stroke="#222" /><path d="M0 3h7l-3.500 3.500z" fill="#222" /></Svg></QuickSlot>
          <QuickSlot $w={4}><QuickSep /></QuickSlot>
          <WinTitle><Fit w={69}>Untitled - Paint</Fit></WinTitle>
        </Quick>
        <WinButtons>
          <WinButton><Minus /></WinButton><WinButton $hot><Restore /></WinButton><WinButton><Cross /></WinButton>
          <QuickSlot $w={3} />
        </WinButtons>
      </TitleBar>
      <TabStrip>
        <RibbonTab $w={56} $kind="file"><Fit w={17}>File</Fit></RibbonTab>
        <RibbonTab $w={58} $kind="home"><Fit w={30}>Home</Fit></RibbonTab>
        <RibbonTab $w={55}><Fit w={25}>View</Fit></RibbonTab>
      </TabStrip>
      <HelpBadge>?</HelpBadge>
      <Tooltip><Fit w={68}>Restore Down</Fit></Tooltip>
      <RibbonArea />
      <HRuler>
        {Array.from({ length: 14 }, (_, i) => <HMark key={i}><Fit w={i === 0 ? 6 : i < 10 ? 18 : 24}>{String(i * 100)}</Fit></HMark>)}
        <HCursor />
      </HRuler>
      <Work>
        <VRuler>
          {Array.from({ length: 6 }, (_, i) => <VMark key={i}><VText>{i * 100}</VText></VMark>)}
          <VCursor />
        </VRuler>
        <Stage>
          <StageTop>
            <Backdrop><Browser><BrowserChrome /><Page /></Browser></Backdrop>
            <VScroll>
              <ArrowSlot $w={16} $h={17}><Arrow d="M0 6l4-4 4 4" /></ArrowSlot>
              <VThumb /><Grow />
              <ArrowSlot $w={16} $h={17}><Arrow d="M0 2l4 4 4-4" /></ArrowSlot>
            </VScroll>
          </StageTop>
          <HScroll>
            <ArrowSlot $w={17} $h={15}><Arrow d="M6 0L2 4l4 4" /></ArrowSlot>
            <HThumb /><Grow />
            <ArrowSlot $w={17} $h={15}><Arrow d="M2 0l4 4-4 4" /></ArrowSlot>
            <ArrowSlot $w={17} $h={15} />
          </HScroll>
        </Stage>
      </Work>
      <Status>
        <Pane $w={156} $pad={4}><Svg w={11}><path d="M5.500 0v11M0 5.500h11M4 1.500L5.500 0 7 1.500M4 9.500L5.500 11 7 9.500M1.500 4L0 5.500 1.500 7M9.500 4L11 5.500 9.500 7" stroke="#24425f" /></Svg></Pane>
        <Pane $w={156} $pad={5}><SizeGlyph dashed /></Pane>
        <Pane $w={156} $pad={5}><SizeGlyph /><Fit w={62}>1366 ì 768px</Fit></Pane>
        <Pane $w={156} $pad={0} />
        <Pane $w={544} $pad={0} />
        <Zoom>
          <Fit w={26}>100%</Fit>
          <RoundKnob $m={7}><Knob /></RoundKnob>
          <Track><Svg w={10} h={16}><path d="M0 0h10v12l-5 4-5-4z" fill="#0078d7" /></Svg></Track>
          <RoundKnob $m={11}><Knob plus /></RoundKnob>
        </Zoom>
      </Status>
      <TaskBar>
        <TaskSys>
          <Svg w={16}><path d="M0 2.300L6.500 1.400V7.500H0zM7.500 1.200L16 0v7.500H7.500zM0 8.500h6.500v6.100L0 13.700zM7.500 8.500H16V16l-8.500-1.200z" fill="#fff" /></Svg>
          <Svg w={17}><circle cx="10.500" cy="6" r="5.300" stroke="#fff" strokeWidth="1.300" /><path d="M6.500 10L.5 16" stroke="#fff" strokeWidth="1.500" /></Svg>
          <Svg w={17} h={15}><path d="M1 0v3h10V0M1 15v-3h10v3M1 5h10v5H1z" stroke="#fff" /><path d="M14.500 0v3.500M14.500 8v7" stroke="#fff" /><path d="M13 4h3v3h-3z" fill="#fff" /></Svg>
        </TaskSys>
        {tasks.map(([icon, open, active], i) => <Task key={i} $open={open} $active={active}>{icon}</Task>)}
        <Tray>
          <TraySlot><Svg w={11} h={7}><path d="M.5 6l5-5 5 5" stroke="#fff" strokeWidth="1.200" /></Svg></TraySlot>
          <TraySlot><VBadge>V</VBadge></TraySlot>
          <TraySlot><Svg w={15}><path d="M7 0l6 2v4c0 4-3 6-6 8-3-2-6-4-6-8V2z" fill="#fff" /><path d="M7 1v12M1 7h12" stroke="#222" /><circle cx="11" cy="11" r="4.500" fill="#12a053" /><path d="M9 11l1.500 1.500L13 9.500" stroke="#fff" /></Svg></TraySlot>
          <TraySlot><Svg w={17} h={15}><path d="M4 2.500h12v8H4zM8 13.500h6M11 10.500v3M.5.500h4v4h-4zM2.500 4.500v9" stroke="#fff" /></Svg></TraySlot>
          <TraySlot><Svg w={16} h={14}><path d="M.5 5h3L7 1.500v11L3.500 9h-3z" stroke="#fff" /><path d="M9 4.500c1.500 1.500 1.500 3.500 0 5M11 3c2 2.500 2 6 0 8" stroke="#fff" /><path d="M13 1.500c3 3.500 3 7.500 0 11" stroke="#777" /></Svg></TraySlot>
          <Clock><Fit w={49}>04:10 PM</Fit><Fit w={59}>20/05/2019</Fit></Clock>
          <TraySlot $w={40}><Svg w={16} h={16}><path d="M.5.500h15v11.500h-5.500L8 15.500V12H.5z" stroke="#fff" strokeWidth="1.200" /></Svg></TraySlot>
        </Tray>
      </TaskBar>
    </Screen>
  );
}
